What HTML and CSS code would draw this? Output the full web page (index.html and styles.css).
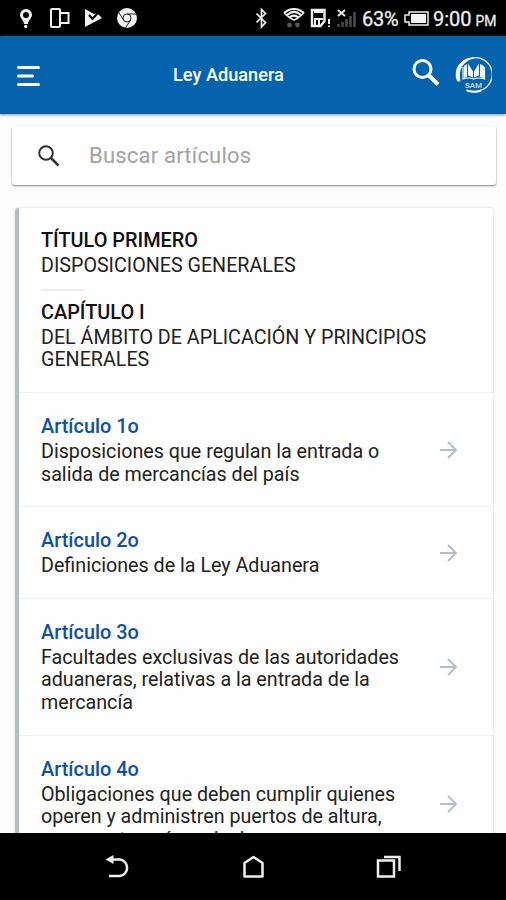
FILE: index.html
```html
<!DOCTYPE html>
<html lang="es">
<head>
<meta charset="utf-8">
<title>Ley Aduanera</title>
<link rel="stylesheet" href="styles.css">
</head>
<body>
<div class="phone">
  <div class="status">
    <svg class="status-left" width="140" height="36" viewBox="0 0 140 36" fill="#f2f2f2">
      <path fill-rule="evenodd" d="M26 9a6 6 0 0 1 6 6c0 3-3.500 5-4 9h-4c-.5-4-4-6-4-9a6 6 0 0 1 6-6zm0 3a2.800 2.800 0 1 0 0 6 2.800 2.800 0 0 0 0-6z"/><circle cx="25.700" cy="26.500" r="1.700"/>
      <g fill="none" stroke="#f2f2f2" stroke-width="2"><rect x="51" y="9" width="9" height="18" rx="1"/><path d="M60 13h8.500v10H60"/></g>
      <path d="M85 9l9 5 3-1 5 5-17 9z"/><path d="M89 15l3.500 4 7-8" fill="none" stroke="#000" stroke-width="2"/>
      <circle cx="127" cy="18" r="10"/><g fill="none" stroke="#222" stroke-width="1"><circle cx="127" cy="18" r="4"/><path d="M127 14h9M123.500 20l-5-8M130.500 20l-5 8"/></g>
    </svg>
    <svg class="status-icons" width="104" height="36" viewBox="256 0 104 36" fill="none" stroke="#f2f2f2">
      <path d="M256.500 13.500l9 9-4 4.500V9.500l4 4-9 9" stroke-width="1.700"/>
      <path d="M284 13c6-5.500 14-5.500 20 0M287 15c4.500-4 9.500-4 14 0M289.500 17.500c3-2.500 6-2.500 9 0" stroke-width="2"/>
      <path d="M284 13c3 2 5 5 10 7 5-2 7-5 10-7" stroke-width="1.500"/>
      <g fill="#555" stroke="none"><circle cx="289.500" cy="25" r="2.400"/><circle cx="297.500" cy="25" r="2.400"/></g>
      <path d="M312 10h12.500v11l-4 5H312z" stroke-width="2.400"/><path d="M314 12h9M314 19h9M315 19v6M319 19v6M329 19v5M329 25.500v1.500" stroke-width="2"/>
      <path d="M338 10l7 6M345 10l-7 6" stroke-width="1.800"/>
      <path d="M338.500 24v3M342.500 22v5M346.500 19v8M350.500 16v11M354.500 12v15" stroke="#4c4c4c" stroke-width="2.500"/>
    </svg>
    <span class="percent">63%</span>
    <svg class="battery" width="28" height="36" viewBox="402 0 28 36"><path d="M409 12h19v13h-19v-3h-4v-7h4z" fill="none" stroke="#eee" stroke-width="1.500"/><path d="M411 14h15v9h-15z" fill="#f2f2f2"/></svg>
    <span class="clock">9:00 <small>PM</small></span>
  </div>
  <header class="bar">
    <svg width="26" height="24" viewBox="0 0 26 24" stroke="#fff" stroke-width="3" stroke-linecap="round"><path d="M3.500 4.500h20M3.500 13h14M3.500 21.500h20"/></svg>
    <h1>Ley Aduanera</h1>
    <svg class="find" width="30" height="30" viewBox="0 0 30 30" fill="none" stroke="#fff"><circle cx="11.500" cy="11" r="8.500" stroke-width="3"/><path d="M17.500 17l9.500 9.500" stroke-width="4"/></svg>
    <svg class="logo" width="38" height="38" viewBox="0 0 38 38"><path d="M3.500 25A16.500 16.500 0 0 1 20 2A18 18 0 0 0 6 25z" fill="#fff" stroke="#fff"/><path d="M17 2.300A16.500 16.500 0 0 1 26 34.500Q20 37 12 34" fill="none" stroke="#dcebfa" stroke-width="1.300"/><path d="M13 34.500q8 2.500 14 0" fill="none" stroke="#fff" stroke-width="2"/><path d="M10 10l3-2v13l-3 1zM14 7.500l5 8v6l-5-2zM20 15.500l5-8v12l-5 2zM26 8l4 2v12l-4-1z" fill="#eaf4ff"/><path d="M9 11v12q6-2 10.500 0 5-2 11 0V11" fill="none" stroke="#fff" stroke-width="1.200"/><text x="19.500" y="31.500" text-anchor="middle">SAM</text></svg>
  </header>
  <main>
    <div class="search">
      <svg width="24" height="24" viewBox="0 0 24 24" fill="none" stroke="#333"><circle cx="9" cy="9" r="6.800" stroke-width="2"/><path d="M14 14l7.500 7.500" stroke-width="2.500"/></svg>
      <span>Buscar artículos</span>
    </div>
    <section class="card">
      <div class="heading">
        <h2>TÍTULO PRIMERO</h2><p>DISPOSICIONES GENERALES</p>
        <hr>
        <h2>CAPÍTULO I</h2><p>DEL ÁMBITO DE APLICACIÓN Y PRINCIPIOS<br>GENERALES</p>
      </div>
      <article><div><h3>Artículo 1o</h3><p>Disposiciones que regulan la entrada o<br>salida de mercancías del país</p></div><svg class="arrow" viewBox="0 0 20 20"><path d="M1 10h16M9 2l8 8-8 8"/></svg></article>
      <article><div><h3>Artículo 2o</h3><p>Definiciones de la Ley Aduanera</p></div><svg class="arrow" viewBox="0 0 20 20"><path d="M1 10h16M9 2l8 8-8 8"/></svg></article>
      <article><div><h3>Artículo 3o</h3><p>Facultades exclusivas de las autoridades<br>aduaneras, relativas a la entrada de la<br>mercancía</p></div><svg class="arrow" viewBox="0 0 20 20"><path d="M1 10h16M9 2l8 8-8 8"/></svg></article>
      <article><div><h3>Artículo 4o</h3><p>Obligaciones que deben cumplir quienes<br>operen y administren puertos de altura,<br>aeropuertos, vías princi</p></div><svg class="arrow" viewBox="0 0 20 20"><path d="M1 10h16M9 2l8 8-8 8"/></svg></article>
    </section>
  </main>
  <nav>
    <svg width="28" height="26" viewBox="106 854 28 26"><path d="M113 859.500h8a8 8.300 0 0 1 0 16.500h-11" fill="none" stroke="#eee" stroke-width="2.500"/><path d="M106.500 859.500l8-4.500v9z" fill="#eee"/></svg>
    <svg width="28" height="26" viewBox="240 854 28 26"><path d="M244.500 876.500V863l9-6 9 6v13.500z" fill="none" stroke="#eee" stroke-width="2.500" stroke-linejoin="round"/></svg>
    <svg width="28" height="26" viewBox="375 854 28 26" fill="none" stroke="#eee" stroke-width="2.500"><path d="M378 860.500h16v16h-16zM384 857h15.500v14"/></svg>
  </nav>
</div>
</body>
</html>
```
FILE: styles.css
```css
* { box-sizing: border-box; }
body { margin: 0; font-family: Roboto, "Liberation Sans", sans-serif; background: #fdfdfd; color: #222; }
h1, h2, h3, p { margin: 0; }
svg { display: block; flex: none; }
.phone { width: 506px; height: 900px; overflow: hidden; display: flex; flex-direction: column; }
.status { height: 36px; flex: none; background: #000; color: #eee; display: flex; align-items: center; font-size: 20px; white-space: nowrap; }
.status-icons { margin-left: 116px; }
.percent { width: 40px; margin-left: 2px; letter-spacing: -0.3px; font-size: 20px; padding-top: 2px; -webkit-text-stroke: 0.3px #eee; }
.clock { margin-left: 3px; padding-top: 2px; -webkit-text-stroke: 0.3px #eee; }
.clock small { font-size: 14px; margin-left: -1px; }
.bar { height: 78px; flex: none; background: #0563ad; box-shadow: 0 1px 3px #8b93a8; display: flex; align-items: center; padding-left: 15px; position: relative; z-index: 1; }
.bar h1 { color: #fff; font-size: 18.2px; font-weight: 500; margin-left: 132px; width: 237.500px; line-height: 24px; }
.logo { margin-left: 13px; }
.find { margin-top: -4px; }
.logo text { font: 8px Roboto, sans-serif; fill: #e5f2ff; }
main { height: 719px; flex: none; overflow: hidden; padding: 12px 10px 0 12px; }
.search { height: 59px; border-radius: 3px; background: #fff; box-shadow: 0 1px 2px #00000080; display: flex; align-items: center; padding-left: 25px; color: #a2a2a2; font-size: 22px; }
.search span { margin-left: 28px; letter-spacing: 0.2px; margin-top: -1px; }
.card { margin: 23px 3px 0 3px; border-left: 4px solid #b0bec5; border-radius: 4px 3px 3px 4px; background: #fefefe; box-shadow: 0 0 3px #0000002b; }
.heading { height: 184px; padding: 20px 0 0 22px; }
h2 { font-size: 19.900px; line-height: 25px; font-weight: 500; color: #111; }
.heading p, article p { font-size: 19.700px; line-height: 22.600px; white-space: nowrap; }
.heading p { margin-top: 2px; }
hr { border: 0; width: 43px; height: 2px; background: #ededed; margin: 11px 0 9px; }
article { border-top: 1px solid #efefef; display: flex; align-items: center; justify-content: space-between; padding: 21px 34px 20px 22px; }
h3 { font-size: 19.900px; line-height: 25px; font-weight: 500; color: #0e50a3; }
article p { margin-top: 2px; }
.arrow { width: 20px; height: 20px; fill: none; stroke: #b6bfc7; stroke-width: 2; }
nav { height: 67px; flex: none; background: #000; display: flex; justify-content: center; align-items: center; gap: 107px; padding-left: 2px; }
```
